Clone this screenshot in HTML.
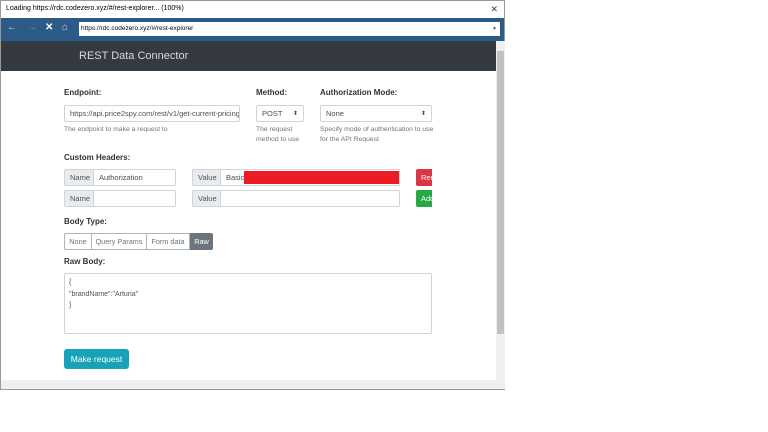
<!DOCTYPE html>
<html><head><style>
*{margin:0;padding:0;box-sizing:border-box}
body{width:768px;height:432px;background:#fff;font-family:"Liberation Sans",sans-serif;position:relative;overflow:hidden;color:#212529}
.a{position:absolute}
.win{left:0;top:0;width:505px;height:390px;border:1px solid #999;background:#fff}
.lbl{font-size:8px;font-weight:bold;color:#333}
.help{font-size:6.8px;color:#6c757d;line-height:10px}
.inp{border:1px solid #ced4da;border-radius:2px;background:#fff;font-size:7.5px;color:#495057;padding:0 5px;display:flex;align-items:center;overflow:hidden;white-space:nowrap}
.grp{background:#e9ecef;border:1px solid #ced4da;font-size:7.5px;color:#495057;display:flex;align-items:center;padding:0 5px}
</style></head><body>
<div class="a win"></div>
<div class="a" style="left:1px;top:1px;width:503px;height:17px;background:#fff;font-size:7px;line-height:16px;padding-left:5px;color:#000">Loading https://rdc.codezero.xyz/#/rest-explorer... (100%)<span class="a" style="right:6px;top:0;font-size:9px;color:#444">✕</span></div>
<div class="a" style="left:1px;top:18px;width:503px;height:23px;background:#2d5b88"></div>
<div class="a" style="left:7px;top:22px;color:#c8d4e0;font-size:10px">←</div>
<div class="a" style="left:27px;top:22px;color:#6f8fb0;font-size:10px">→</div>
<div class="a" style="left:45px;top:22px;color:#fff;font-size:10px;font-weight:bold">✕</div>
<div class="a" style="left:62px;top:22px;color:#d0dbe6;font-size:10px">⌂</div>
<div class="a" style="left:79px;top:22px;width:421px;height:14px;background:#fff;font-size:6.5px;line-height:14px;padding-left:2px;color:#000">https://rdc.codezero.xyz/#/rest-explorer<span class="a" style="right:3px;top:0;font-size:5px;color:#555">▼</span></div>
<div class="a" style="left:1px;top:41px;width:495px;height:30px;background:#343a40;color:#d8dadc;font-size:11px;line-height:31px;padding-left:78px">REST Data Connector</div>
<div class="a" style="left:496px;top:41px;width:9px;height:348px;background:#f0f0f0"></div>
<div class="a" style="left:497px;top:51px;width:7px;height:283px;background:#c1c1c1"></div>
<div class="a" style="left:1px;top:380px;width:495px;height:9px;background:#f0f0f0"></div>

<div class="a lbl" style="left:64px;top:88px">Endpoint:</div>
<div class="a lbl" style="left:256px;top:88px">Method:</div>
<div class="a lbl" style="left:320px;top:88px">Authorization Mode:</div>
<div class="a inp" style="left:64px;top:105px;width:176px;height:17px">https://api.price2spy.com/rest/v1/get-current-pricing</div>
<div class="a inp" style="left:256px;top:105px;width:48px;height:17px">POST<span class="a" style="right:5px;font-size:6px">⬍</span></div>
<div class="a inp" style="left:320px;top:105px;width:112px;height:17px">None<span class="a" style="right:5px;font-size:6px">⬍</span></div>
<div class="a help" style="left:64px;top:125px">The endpoint to make a request to</div>
<div class="a help" style="left:256px;top:125px">The request<br>method to use</div>
<div class="a help" style="left:320px;top:125px">Specify mode of authentication to use<br>for the API Request</div>

<div class="a lbl" style="left:64px;top:153px">Custom Headers:</div>
<div class="a grp" style="left:64px;top:169px;width:30px;height:17px;border-radius:2px 0 0 2px">Name</div>
<div class="a inp" style="left:93px;top:169px;width:83px;height:17px;border-radius:0 2px 2px 0">Authorization</div>
<div class="a grp" style="left:192px;top:169px;width:29px;height:17px;border-radius:2px 0 0 2px">Value</div>
<div class="a inp" style="left:220px;top:169px;width:180px;height:17px;border-radius:0 2px 2px 0">Basic</div>
<div class="a" style="left:244px;top:171px;width:155px;height:13px;background:#ed1c24"></div>
<div class="a" style="left:416px;top:169px;width:16px;height:17px;background:#dc3545;border-radius:2px 0 0 2px;color:#fff;font-size:7.5px;line-height:17px;padding-left:5px;overflow:hidden">Rem</div>
<div class="a grp" style="left:64px;top:190px;width:30px;height:17px;border-radius:2px 0 0 2px">Name</div>
<div class="a inp" style="left:93px;top:190px;width:83px;height:17px;border-radius:0 2px 2px 0"></div>
<div class="a grp" style="left:192px;top:190px;width:29px;height:17px;border-radius:2px 0 0 2px">Value</div>
<div class="a inp" style="left:220px;top:190px;width:180px;height:17px;border-radius:0 2px 2px 0"></div>
<div class="a" style="left:416px;top:190px;width:16px;height:17px;background:#28a745;border-radius:2px 0 0 2px;color:#fff;font-size:7.5px;line-height:17px;padding-left:5px;overflow:hidden">Add</div>

<div class="a lbl" style="left:64px;top:217px">Body Type:</div>
<div class="a" style="left:64px;top:233px;height:17px;display:flex;font-size:7.3px;color:#6c757d">
<div style="border:1px solid #adb5bd;border-radius:2px 0 0 2px;width:28px;text-align:center;line-height:15px">None</div>
<div style="border:1px solid #adb5bd;border-left:none;width:55px;text-align:center;line-height:15px">Query Params</div>
<div style="border:1px solid #adb5bd;border-left:none;width:43px;text-align:center;line-height:15px">Form data</div>
<div style="background:#6c757d;border:1px solid #6c757d;color:#fff;border-radius:0 2px 2px 0;width:23px;text-align:center;line-height:15px">Raw</div>
</div>
<div class="a lbl" style="left:64px;top:257px">Raw Body:</div>
<div class="a" style="left:64px;top:273px;width:368px;height:61px;border:1px solid #ced4da;border-radius:2px;font-size:7px;color:#495057;padding:3px 4px;line-height:11.5px">{<br>"brandName":"Arturia"<br>}</div>
<div class="a" style="left:64px;top:349px;width:65px;height:20px;background:#17a2b8;border-radius:3px;color:#fff;font-size:8.5px;line-height:20px;text-align:center">Make request</div>
</body></html>
